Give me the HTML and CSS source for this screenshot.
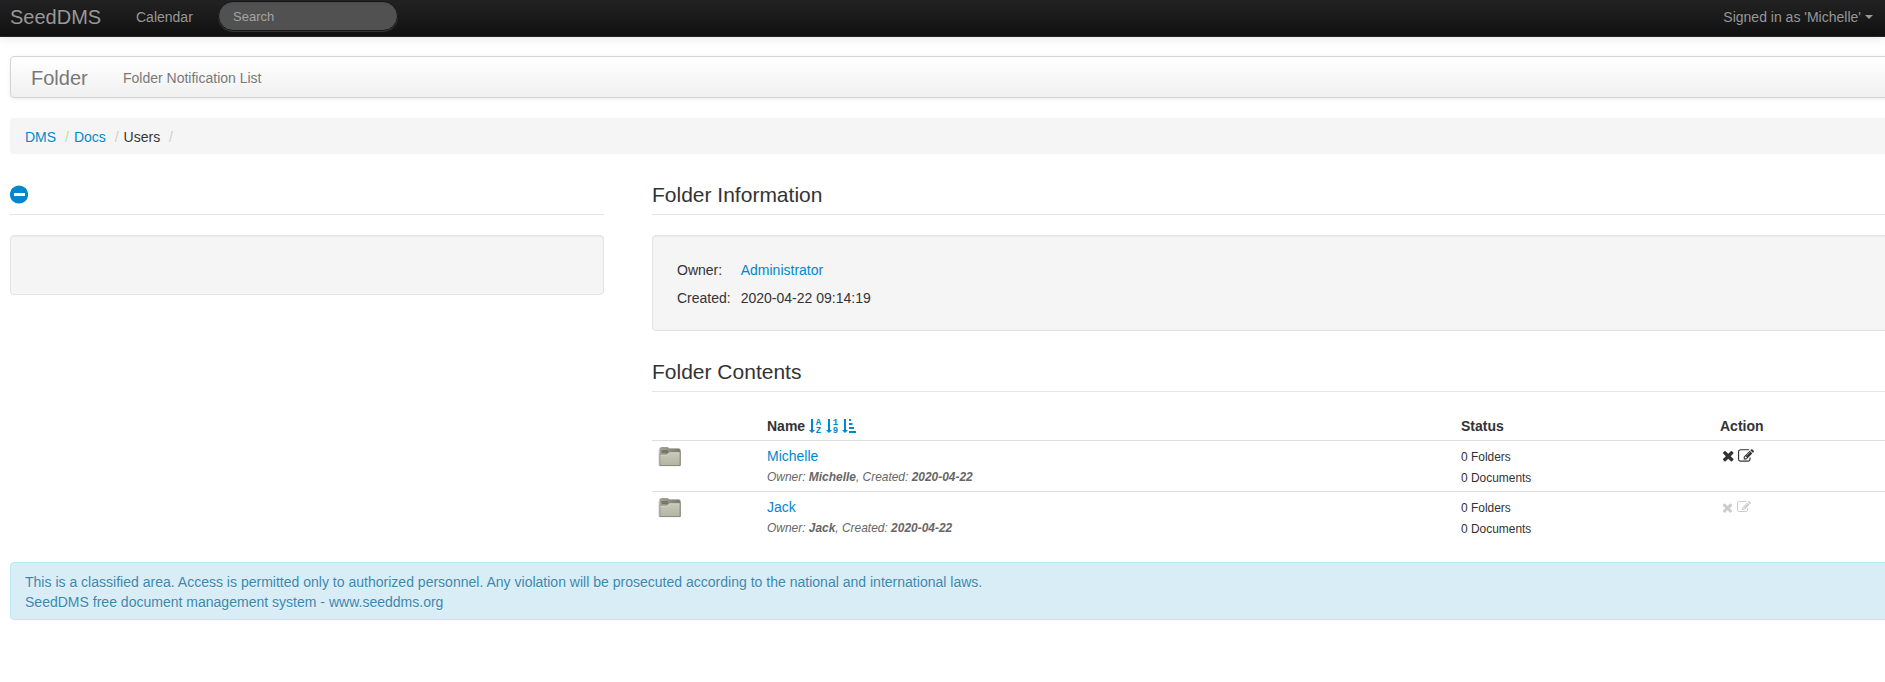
FILE: index.html
```html
<!DOCTYPE html>
<html lang="en">
<head>
<meta charset="utf-8">
<title>SeedDMS</title>
<link rel="stylesheet" href="styles.css">
</head>
<body>
<svg class="defs" width="0" height="0" aria-hidden="true">
  <defs>
    <linearGradient id="front" x1="0" y1="0" x2="0" y2="1"><stop offset="0" stop-color="#c9cabb"/><stop offset="1" stop-color="#b3b4a1"/></linearGradient>
    <linearGradient id="back" x1="0" y1="0" x2="1" y2="0"><stop offset="0" stop-color="#a5a695"/><stop offset="1" stop-color="#77786c"/></linearGradient>
    <symbol id="folder" viewBox="0 0 24 24">
      <path d="M2.800 4.300q0-1.800 1.500-1.800h6.200q1 0 1.500 1.300h9.800q1.500 0 1.500 1.500v15H2.800z" fill="url(#back)" stroke="#898a7c" stroke-width=".7"/>
      <path d="M4.500 5h6.500v3H4.500z" fill="#777869"/>
      <path d="M2.800 9.300h7.300l2-2.300h11v13.600H2.800z" fill="url(#front)" stroke="#85867a" stroke-width=".9"/>
      <path d="M3.500 10.100h7l2-2.300h10" fill="none" stroke="#dedfd3" stroke-width=".7"/>
      <path d="M2 5v15.500" stroke="#c9c9c4" stroke-width=".8"/>
    </symbol>
    <symbol id="times" viewBox="192 0 1408 1792"><path transform="translate(0 -40)" d="M1490 1322q0 40-28 68l-136 136q-28 28-68 28t-68-28l-294-294-294 294q-28 28-68 28t-68-28l-136-136q-28-28-28-68t28-68l294-294-294-294q-28-28-28-68t28-68l136-136q28-28 68-28t68 28l294 294 294-294q28-28 68-28t68 28l136 136q28 28 28 68t-28 68l-294 294 294 294q28 28 28 68z"/></symbol>
    <symbol id="edit" viewBox="0 0 1792 1792"><path d="M888 1184l116-116-152-152-116 116v56h96v96h56zm440-720q-16-16-33 1l-350 350q-17 17-1 33t33-1l350-350q17-17 1-33zm80 594v190q0 119-84.500 203.500t-203.500 84.500h-832q-119 0-203.500-84.500t-84.500-203.500v-832q0-119 84.500-203.500t203.500-84.500h832q63 0 117 25 15 7 18 23 3 17-9 29l-49 49q-14 14-32 8-23-6-45-6h-832q-66 0-113 47t-47 113v832q0 66 47 113t113 47h832q66 0 113-47t47-113v-126q0-13 9-22l64-64q15-15 35-7t20 29zm-96-738l288 288-672 672h-288v-288zm444 132l-92 92-288-288 92-92q28-28 68-28t68 28l152 152q28 28 28 68t-28 68z"/></symbol>
    <symbol id="down" viewBox="0 0 6 14"><path d="M2 0h2v11h2l-3 3-3-3h2z"/></symbol>
  </defs>
</svg>
<header class="navbar">
  <a class="brand">SeedDMS</a>
  <a class="nav-link">Calendar</a>
  <input class="search" type="text" placeholder="Search">
  <a class="user">Signed in as 'Michelle'<span class="caret"></span></a>
</header>
<main class="page">
  <nav class="subnav"><a class="subnav-brand">Folder</a><a class="subnav-link">Folder Notification List</a></nav>
  <div class="breadcrumb"><a>DMS</a> <span class="divider">/</span><a>Docs</a> <span class="divider">/</span>Users <span class="divider">/</span></div>
  <div class="columns">
    <section class="side">
      <h3 class="legend"><svg class="collapse" viewBox="0 0 18 18"><circle cx="9" cy="9" r="9.100"/><path d="M4 7.500h11v3H4z" fill="#fff"/></svg></h3>
      <div class="well"></div>
    </section>
    <section class="content">
      <h3 class="legend">Folder Information</h3>
      <div class="well info">
        <table class="facts">
          <tr><td>Owner:</td><td><a>Administrator</a></td></tr>
          <tr><td>Created:</td><td>2020-04-22 09:14:19</td></tr>
        </table>
      </div>
      <h3 class="legend">Folder Contents</h3>
      <table class="list">
        <colgroup><col class="c-icon"><col class="c-name"><col class="c-status"><col></colgroup>
        <thead><tr>
          <th></th>
          <th><div class="sort-head">Name
            <span class="sorts">
              <svg class="sort" viewBox="0 0 14 14"><use href="#down" width="6" height="14"/><text x="6.800" y="6">A</text><text x="6.800" y="14">Z</text></svg>
              <svg class="sort" viewBox="0 0 14 14"><use href="#down" width="6" height="14"/><text x="6.800" y="6">1</text><text x="6.800" y="14">9</text></svg>
              <svg class="sort" viewBox="0 0 14 14"><use href="#down" width="6" height="14"/><path d="M7 0h2v2H7zM7 4h3.500v2H7zM7 8h5v2H7zM7 12h7v2H7z"/></svg>
            </span></div></th>
          <th>Status</th><th>Action</th>
        </tr></thead>
        <tbody>
          <tr>
            <td><svg class="folder"><use href="#folder"/></svg></td>
            <td><a>Michelle</a><div class="meta">Owner: <b>Michelle</b>, Created: <b>2020-04-22</b></div></td>
            <td><small>0 Folders<br>0 Documents</small></td>
            <td><div class="actions"><svg class="times"><use href="#times"/></svg><svg class="edit"><use href="#edit"/></svg></div></td>
          </tr>
          <tr>
            <td><svg class="folder"><use href="#folder"/></svg></td>
            <td><a>Jack</a><div class="meta">Owner: <b>Jack</b>, Created: <b>2020-04-22</b></div></td>
            <td><small>0 Folders<br>0 Documents</small></td>
            <td><div class="actions disabled"><svg class="times"><use href="#times"/></svg><svg class="edit"><use href="#edit"/></svg></div></td>
          </tr>
        </tbody>
      </table>
    </section>
  </div>
  <footer class="notice">This is a classified area. Access is permitted only to authorized personnel. Any violation will be prosecuted according to the national and international laws.<br>SeedDMS free document management system - www.seeddms.org</footer>
</main>
</body>
</html>
```
FILE: styles.css
```css
* { box-sizing: border-box; }
html { overflow: hidden; }
body { margin: 0; background: #fff; color: #333; font: 14px/20px "Liberation Sans", Arial, sans-serif; overflow: hidden; height: 682px; }
a { color: #0088cc; text-decoration: none; }
.defs { display: block; height: 0; }

.navbar { display: flex; align-items: flex-start; height: 37px; padding: 0 12px 0 10px; border-bottom: 1px solid #252525; background: linear-gradient(#222, #111); box-shadow: 0 1px 10px rgba(0, 0, 0, .1); }
.navbar a { color: #999; text-shadow: 0 -1px 0 rgba(0, 0, 0, .25); padding-top: 7px; }
.navbar .brand { font-size: 20px; width: 126px; }
.navbar .nav-link { width: 82px; }
.search { width: 180px; height: 30px; margin: 1px 0 0; padding: 4px 14px; border: 1px solid #151515; border-radius: 15px; background: #515151; color: #ccc; font: 13px/20px "Liberation Sans", Arial, sans-serif; box-shadow: inset 0 1px 2px rgba(0, 0, 0, .1), 0 1px 0 rgba(255, 255, 255, .15); }
.search::placeholder { color: #a3a3a3; opacity: 1; }
.navbar .user { display: flex; margin-left: auto; }
.caret { width: 0; height: 0; margin: 8px 0 0 4px; border: 4px solid transparent; border-top-color: #999; border-bottom: 0; }

.page { width: 1915px; padding: 19px 0 0 10px; }
.subnav { display: flex; height: 42px; padding: 11px 20px; border: 1px solid #d4d4d4; border-radius: 4px; background: linear-gradient(#fff, #f0f0f0); box-shadow: 0 1px 4px rgba(0, 0, 0, .065); }
.subnav a { color: #777; text-shadow: 0 1px 0 #fff; }
.subnav .subnav-brand { width: 92px; font-size: 20px; }
.breadcrumb { margin: 20px 0; padding: 9px 15px 7px; border-radius: 4px; background: #f5f5f5; text-shadow: 0 1px 0 #fff; }
.divider { padding: 0 5px; color: #ccc; }

.columns { display: flex; gap: 48px; }
.side { width: 594px; }
.content { flex: 1; }
.legend { height: 41px; margin: 0 0 20px; padding-top: 1px; border-bottom: 1px solid #e5e5e5; font-size: 21px; font-weight: 400; line-height: 39px; }
.content .legend { line-height: 40px; }
.collapse { display: block; width: 18px; height: 39px; fill: #0088cc; }
.well { min-height: 60px; margin-bottom: 20px; padding: 19px; border: 1px solid #e3e3e3; border-radius: 4px; background: #f5f5f5; box-shadow: inset 0 1px 1px rgba(0, 0, 0, .05); }
.side .well { margin-bottom: 0; }
table { border-collapse: collapse; border-spacing: 0; }
.facts td { padding: 5px 5px 3px; }

.list { width: 1263px; margin-bottom: 20px; table-layout: fixed; border-collapse: separate; }
.c-icon { width: 110px; }
.c-name { width: 694px; }
.c-status { width: 259px; }
.list th { height: 28px; padding: 4px 5px; text-align: left; line-height: 20px; }
.list td { height: 51px; padding: 5px 5px 2px; border-top: 1px solid #ddd; vertical-align: top; }
.sort-head { display: flex; align-items: center; }
.sorts { display: flex; gap: 2.500px; margin-left: 4px; }
.sort { width: 14px; height: 14px; fill: #0088cc; font: bold 9px "Liberation Mono", monospace; overflow: visible; }
.meta { margin-top: 1px; color: #666; font-size: 11.950px; font-style: italic; }
small { display: block; margin-top: 1px; font-size: 11.950px; line-height: 21px; }
.folder { display: block; width: 24px; height: 24px; margin-top: -1px; }
.actions { display: flex; align-items: flex-start; gap: 3px; padding-left: 2px; fill: #333; }
.actions .times { width: 12.500px; height: 16px; margin-top: 2px; }
.actions .edit { width: 16px; height: 16px; margin-top: 2px; }
.actions.disabled { gap: 4px; fill: #ccc; }
.disabled .times { width: 11px; height: 14px; margin-top: 4px; }
.disabled .edit { width: 14px; height: 14px; margin-top: 3px; }

.notice { height: 58px; padding: 9px 14px 7px; border: 1px solid #bce8f1; border-radius: 4px; background: #d9edf7; color: #3a87ad; letter-spacing: .01px; text-shadow: 0 1px 0 rgba(255, 255, 255, .5); }
```
